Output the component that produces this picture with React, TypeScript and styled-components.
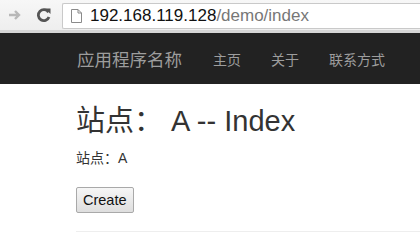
import React from 'react';
import styled, { createGlobalStyle } from 'styled-components';

const GlobalStyle = createGlobalStyle`
  html, body {
    margin: 0;
    padding: 0;
    background: #fff;
    font-family: "Liberation Sans", "Noto Sans CJK SC", sans-serif;
    overflow: hidden;
  }
`;

const Page = styled.div`
  width: 420px;
  height: 243px;
  display: flex;
  flex-direction: column;
  overflow: hidden;
`;

const BrowserBar = styled.div`
  height: 30px;
  display: flex;
  align-items: center;
  padding: 0 0 0 5px;
  background: linear-gradient(#f7f7f7, #eeeeee);
  border-bottom: 3px solid #d6d6d6;
`;

const ToolButton = styled.div<{ $width: number }>`
  width: ${(p) => p.$width}px;
  height: 24px;
  display: flex;
  align-items: center;
  justify-content: center;
`;

const AddressBox = styled.div`
  flex: 1;
  height: 24px;
  margin-top: 1px;
  display: flex;
  align-items: center;
  gap: 8px;
  padding-left: 8px;
  background: #fff;
  border: 1px solid #c9c9c9;
  border-right: none;
  border-radius: 2px 0 0 2px;
  font-size: 17px;
`;

const Host = styled.span`
  color: #111;
`;

const UrlPath = styled.span`
  color: #777;
`;

const Navbar = styled.nav`
  height: 51px;
  background: #222222;
  display: flex;
  align-items: center;
  padding-left: 77px;
  font-family: "Noto Sans CJK SC", sans-serif;
`;

const Brand = styled.span`
  color: #9d9d9d;
  font-size: 17.5px;
  margin-right: 31px;
`;

const NavLink = styled.span`
  color: #9d9d9d;
  font-size: 14px;
  margin-right: 30px;
`;

const Content = styled.main`
  padding: 20px 0 0 76px;
  color: #333;
`;

const Title = styled.h2`
  margin: 0;
  font-size: 29px;
  font-weight: 400;
  line-height: 34px;
  font-family: "Liberation Sans", "Noto Sans CJK SC", sans-serif;
`;

const Site = styled.p`
  margin: 10px 0 0;
  font-size: 14px;
  line-height: 20px;
`;

const CreateButton = styled.button`
  margin-top: 19px;
  height: 26px;
  padding: 0 6px;
  font-family: "Liberation Sans", sans-serif;
  font-size: 14.5px;
  color: #111;
  background: linear-gradient(#f6f6f6, #dedede);
  border: 1px solid #a9a9a9;
  border-radius: 2px;
`;

const Rule = styled.hr`
  margin: 18px 0 0;
  border: 0;
  border-top: 1px solid #eeeeee;
`;

const ArrowIcon = () => (
  <svg width="16" height="14" viewBox="0 0 16 14">
    <path d="M2 7h10M8 3l4 4-4 4" stroke="#b8b8b8" strokeWidth="2.4" fill="none" />
  </svg>
);

const ReloadIcon = () => (
  <svg width="16" height="16" viewBox="0 0 16 16">
    <path d="M12.5 5.2A5.5 5.5 0 1 0 13 10" stroke="#555" strokeWidth="2.8" fill="none" />
    <path d="M9 1.5h5.5V7z" fill="#555" />
  </svg>
);

const PageIcon = () => (
  <svg width="11" height="14" viewBox="0 0 11 14">
    <path d="M0.5 0.5h6.5l3.5 3.5v9.5h-10z" fill="#fff" stroke="#8a8a8a" />
    <path d="M7 0.5v3.5h3.5" fill="none" stroke="#8a8a8a" />
  </svg>
);

export default function App() {
  return (
    <Page>
      <GlobalStyle />
      <BrowserBar>
        <ToolButton $width={20}>
          <ArrowIcon />
        </ToolButton>
        <ToolButton $width={37}>
          <ReloadIcon />
        </ToolButton>
        <AddressBox>
          <PageIcon />
          <span>
            <Host>192.168.119.128</Host>
            <UrlPath>/demo/index</UrlPath>
          </span>
        </AddressBox>
      </BrowserBar>
      <Navbar>
        <Brand>应用程序名称</Brand>
        <NavLink>主页</NavLink>
        <NavLink>关于</NavLink>
        <NavLink>联系方式</NavLink>
      </Navbar>
      <Content>
        <Title>站点： A -- Index</Title>
        <Site>站点：A</Site>
        <CreateButton>Create</CreateButton>
        <Rule />
      </Content>
    </Page>
  );
}
